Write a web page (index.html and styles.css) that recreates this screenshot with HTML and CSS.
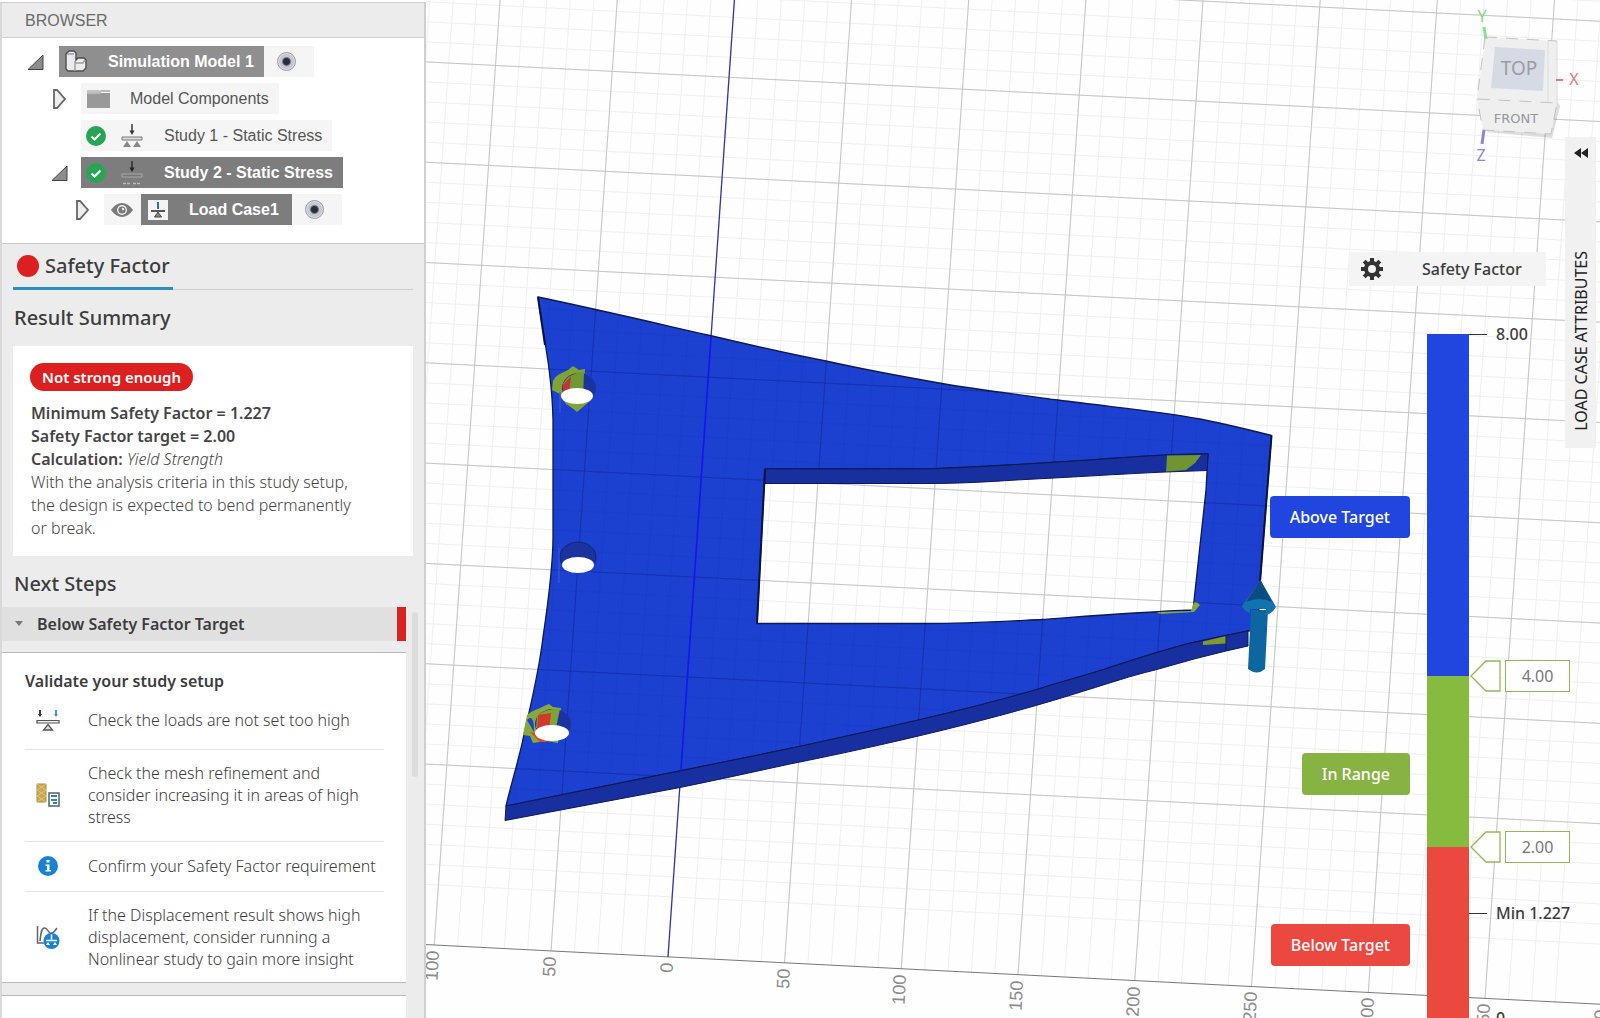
FILE: index.html
```html
<!DOCTYPE html>
<html lang="en">
<head>
<meta charset="utf-8">
<title>Simulation results - Safety Factor</title>
<link rel="stylesheet" href="styles.css">
</head>
<body>
<div class="app">
  <aside class="panel">
    <h1 class="panel-title">BROWSER</h1>

    <div class="tree">
      <div class="row">
        <button class="toggle" aria-label="Collapse"><svg width="18" height="18" viewBox="0 0 18 18"><path d="M2 16.500H17V2z" fill="#8c8c8c" stroke="#444"/></svg></button>
        <span class="node node-root">
          <svg width="24" height="24" viewBox="0 0 24 24"><path d="M2 4l3-3h5l2 2v7l2-2h6l2 2v8l-3 3H4l-2-2z" fill="#e9ebef" stroke="#4d4d4d" stroke-width="1.400"/><path d="M11 21V11M11 13h8l2-3M3 4h7" fill="none" stroke="#9a9da3" stroke-width="1.400"/></svg>
          <span>Simulation Model 1</span>
        </span>
        <label class="pick"><input type="radio" name="model" checked aria-label="Activate Simulation Model 1"></label>
      </div>
      <div class="row depth-1">
        <button class="toggle" aria-label="Expand"><svg width="18" height="22" viewBox="0 0 18 22"><path d="M3 2h3l8 9-8 9H3z" fill="#eee" stroke="#666" stroke-width="1.800"/></svg></button>
        <span class="node">
          <svg width="24" height="20" viewBox="0 0 24 20"><path d="M1 1h12l2 3H1z" fill="#c4c4c4"/><path d="M1 4h23v15H1z" fill="#999"/><path d="M1 4h12l2-2h9" fill="none" stroke="#bbb" stroke-width="2"/></svg>
          <span>Model Components</span>
        </span>
      </div>
      <div class="row depth-1">
        <span class="toggle"></span>
        <span class="node node-study">
          <svg width="20" height="20" viewBox="0 0 20 20"><circle cx="10" cy="10" r="10" fill="#27a552"/><path d="M5.500 10.500l3 3 6-6" fill="none" stroke="#fff" stroke-width="2.200"/></svg>
          <svg width="22" height="24" viewBox="0 0 22 24"><path d="M11 0v9" stroke="#444" stroke-width="1.600"/><path d="M8.500 6.500h5L11 11z" fill="#333"/><path d="M1 13h20v3H1z" fill="#ddd" stroke="#777"/><path d="M6 17l4 6H2zM16 17l4 6h-8z" fill="#888"/></svg>
          <span>Study 1 - Static Stress</span>
        </span>
      </div>
      <div class="row depth-1">
        <button class="toggle" aria-label="Collapse"><svg width="18" height="18" viewBox="0 0 18 18"><path d="M1 16.500H16V2z" fill="#8c8c8c" stroke="#444"/></svg></button>
        <span class="node node-study node-active">
          <svg width="20" height="20" viewBox="0 0 20 20"><circle cx="10" cy="10" r="10" fill="#27a552"/><path d="M5.500 10.500l3 3 6-6" fill="none" stroke="#fff" stroke-width="2.200"/></svg>
          <svg width="22" height="24" viewBox="0 0 22 24"><path d="M11 0v9" stroke="#333" stroke-width="1.600"/><path d="M8.500 6.500h5L11 11z" fill="#222"/><path d="M1 13h20v3H1z" fill="#777" stroke="#aaa"/><path d="M2 22.500h8M12 22.500h8" stroke="#bbb" stroke-width="1.400" stroke-dasharray="3 1"/></svg>
          <span>Study 2 - Static Stress</span>
        </span>
      </div>
      <div class="row depth-2">
        <button class="toggle" aria-label="Expand"><svg width="18" height="22" viewBox="0 0 18 22"><path d="M3 2h3l8 9-8 9H3z" fill="#eee" stroke="#666" stroke-width="1.800"/></svg></button>
        <button class="eye" aria-label="Show load case"><svg width="22" height="16" viewBox="0 0 22 16"><path d="M0 8Q5 1 11 1t11 7q-5 7-11 7T0 8z" fill="#7a7a7a"/><circle cx="11" cy="8" r="5" fill="#eee"/><circle cx="11" cy="8" r="3.600" fill="#7a7a7a"/><circle cx="12" cy="7" r="1.200" fill="#eee"/></svg></button>
        <span class="node node-case node-active">
          <svg width="20" height="20" viewBox="0 0 20 20"><path d="M0 0h20v20H0z" fill="#f4f4f4"/><path d="M10 2v7" stroke="#2a6fb0" stroke-width="2"/><path d="M3 11h14" stroke="#444" stroke-width="1.800"/><path d="M10 12l3.500 5h-7z" fill="#888" stroke="#444"/></svg>
          <span>Load Case1</span>
        </span>
        <label class="pick"><input type="radio" name="case" checked aria-label="Activate Load Case1"></label>
      </div>
    </div>

    <div class="tabs">
      <button class="tab"><span class="dot"></span>Safety Factor</button>
    </div>

    <h2 class="heading">Result Summary</h2>
    <section class="summary">
      <strong class="pill">Not strong enough</strong>
      <p><b>Minimum Safety Factor = 1.227</b></p>
      <p><b>Safety Factor target = 2.00</b></p>
      <p><b>Calculation:</b> <i>Yield Strength</i></p>
      <p>With the analysis criteria in this study setup, the design is expected to bend permanently or break.</p>
    </section>

    <h2 class="heading heading-next">Next Steps</h2>
    <div class="steps">
      <div class="steps-list">
        <button class="accordion"><svg width="8" height="6" viewBox="0 0 8 6"><path d="M0 0h8L4 5z" fill="#777"/></svg>Below Safety Factor Target</button>
        <section class="card">
          <h3>Validate your study setup</h3>
          <ul>
            <li>
              <svg width="24" height="24" viewBox="0 0 24 24"><path d="M4 2v6" stroke="#444" stroke-width="2"/><path d="M2 6h4L4 9z" fill="#333"/><path d="M20 2v6" stroke="#3f9ad8" stroke-width="2"/><path d="M18 6h4l-2 3z" fill="#3f9ad8"/><path d="M1 12.500h22v2.500H1z" fill="#eee" stroke="#555" stroke-width="1.200"/><path d="M12 16.500l4.500 5.500h-9z" fill="#ddd" stroke="#555" stroke-width="1.300"/></svg>
              <span>Check the loads are not set too high</span>
            </li>
            <li>
              <svg width="24" height="24" viewBox="0 0 24 24"><path d="M1 1h9v18H1z" fill="#c9a94f" stroke="#ad8e3c"/><path d="M1 1l9 6-9 6 9 6M10 1L1 7l9 6-9 6" fill="none" stroke="#dcc47c"/><path d="M13 10h10v13H13z" fill="#fff" stroke="#4c6375" stroke-width="1.500"/><path d="M15 13h6M15 17h6M17 20h4" stroke="#3481b8" stroke-width="2"/></svg>
              <span>Check the mesh refinement and consider increasing it in areas of high stress</span>
            </li>
            <li>
              <svg width="24" height="24" viewBox="0 0 24 24"><circle cx="12" cy="12" r="10" fill="#1a82d2"/><path d="M10.500 6h3v2.500h-3zM9.500 10.500h4V16H15v1.500H9.500V16h1.500v-4H9.500z" fill="#fff"/></svg>
              <span>Confirm your Safety Factor requirement</span>
            </li>
            <li>
              <svg width="24" height="24" viewBox="0 0 24 24"><path d="M1.500 1v17H8M4 16C5 8 5 4 8 3s4 4 6 5 5-2 7-5" fill="none" stroke="#666" stroke-width="1.500"/><circle cx="15.500" cy="16" r="8" fill="#1a82d2"/><path d="M15.500 9.500v5M10 15.500h11" stroke="#fff" stroke-width="1.600"/><path d="M12 17l2 3h-4zM19 17l2 3h-4z" fill="#fff"/></svg>
              <span>If the Displacement result shows high displacement, consider running a Nonlinear study to gain more insight</span>
            </li>
          </ul>
        </section>
        <section class="card card-more">
          <h3>Check other results</h3>
        </section>
      </div>
      <div class="scroll-thumb"></div>
    </div>
  </aside>

  <main class="stage">
    <svg class="scene" viewBox="426 0 1174 1018" preserveAspectRatio="xMinYMin slice" role="img" aria-label="Safety factor plot of the bracket">
      <defs>
        <g id="grid" transform="matrix(23.350 1.186 -1.392 19.990 729 77.300)" fill="none">
          <path class="minor" d="M-14-6V44m1 0V-6m1 0V44m1 0V-6m1 0V44m1 0V-6m1 0V44m1 0V-6m1 0V44m1 0V-6m1 0V44m1 0V-6m1 0V44m1 0V-6m1 0V44m1 0V-6m1 0V44m1 0V-6m1 0V44m1 0V-6m1 0V44m1 0V-6m1 0V44m1 0V-6m1 0V44m1 0V-6m1 0V44m1 0V-6m1 0V44m1 0V-6m1 0V44m1 0V-6m1 0V44m1 0V-6m1 0V44m1 0V-6m1 0V44m1 0V-6m1 0V44m1 0V-6m1 0V44m1 0V-6m1 0V44m1 0V-6m1 0V44m1 0V-6m1 0V44m1 0V-6m1 0V44m1 0V-6m1 0V44m1 0V-6m1 0V44"/>
          <path class="minor" d="M-14-6H41m0 1H-14m0 1H41m0 1H-14m0 1H41m0 1H-14m0 1H41m0 1H-14m0 1H41m0 1H-14m0 1H41m0 1H-14m0 1H41m0 1H-14m0 1H41m0 1H-14m0 1H41m0 1H-14m0 1H41m0 1H-14m0 1H41m0 1H-14m0 1H41m0 1H-14m0 1H41m0 1H-14m0 1H41m0 1H-14m0 1H41m0 1H-14m0 1H41m0 1H-14m0 1H41m0 1H-14m0 1H41m0 1H-14m0 1H41m0 1H-14m0 1H41m0 1H-14m0 1H41m0 1H-14m0 1H41m0 1H-14m0 1H41m0 1H-14m0 1H41m0 1H-14"/>
          <path class="major" d="M-10-6V44m5 0V-6m10 0V44m5 0V-6m5 0V44m5 0V-6m5 0V44m5 0V-6m5 0V44m5 0V-6M-14-5H41m0 5H-14m0 5H41m0 5H-14m0 5H41m0 5H-14m0 5H41m0 5H-14m0 5H41"/>
          <path class="edge" d="M-14 44H41"/>
        </g>
        <path id="plate" fill-rule="evenodd" clip-rule="evenodd" d="M538 297C600 310 655 323 710 335.500C750 345 790 354 826 361C866 370 905 377 942 383.500C980 390 1020 395 1058 400C1110 407 1160 411 1200 419C1225 424 1250 430 1271.500 435.500L1260 582L1258 630L1248 631L1226 635.500L1191 643C1160 651 1130 661 1105 669C1080 677 1060 682 1035 690C960 712 870 731 790 748.500L680 771L506 806C511 785 517 765 522 744C526 723 538 680 543 637C550 590 553 560 553 537V420C552 370 542 330 538 297zM765 469H926C985 467 1040 463 1091 460C1130 457 1170 454 1208 454L1206 490L1193 610C1140 612 1090 616 1041 619.500C1010 621 970 623.500 926 623.500H757z"/>
      </defs>
      <path d="M426 0h1174v1018H426z" fill="#fefefe"/>
      <use href="#grid"/>
      <path d="M734.400 0L668 957" stroke="#3434a8" stroke-width="1.300"/>

      <use href="#plate" fill="#1c40cf" stroke="#0c1a55" stroke-width="1.300"/>
      <path d="M506 806L680 771L790 748.500C870 731 960 712 1035 690C1060 682 1080 677 1105 669C1130 661 1160 651 1191 643L1226 635.500L1248 631V646L1226 651L1194 659L1155 670C1130 676 1110 683 1087 690C1000 718 890 744 790 764C753 772 717 780 680 787.500L505 820.500z" fill="#18309f" stroke="#0c1a55"/>
      <path d="M765 469H926C985 467 1040 463 1091 460C1130 457 1170 454 1208 454L1207 470.500C1145 472 1080 477 1016 480C985 482 960 483.500 926 483.500H765z" fill="#18309f" stroke="#0c1a55"/>
      <path d="M765 469L757 623.500M1271.500 435.500L1260 582M538 297L545 345" stroke="#0a1440" stroke-width="2"/>
      <path d="M1167 455.500L1201 455L1195 463L1186 470L1166 471.500z" fill="#6f9430"/>
      <path d="M1157 612L1191 611L1194 602L1197 602L1200 605L1194 612L1160 614z" fill="#86a93a"/>
      <path d="M1203 641.500L1226 636V643.500L1203 645z" fill="#7d9c2f"/>
      <path d="M1226 636v15" stroke="#0c1a55"/>

      <clipPath id="onPlate"><use href="#plate"/></clipPath>
      <g clip-path="url(#onPlate)">
        <use href="#grid" class="grid-over"/>
        <path d="M734.400 0L668 957" stroke="#1515f0" stroke-width="1.600"/>
      </g>

      <path d="M552 390L553 381C556 374 563 373 568 370L573 366L579 370L585 369L584 385L586 401L577 411L566 404L560 394z" fill="#7fa335"/>
      <ellipse cx="579" cy="388" rx="17" ry="15" fill="#1a339f"/>
      <path d="M563 384C567 375 577 372 584 372L583 398H566z" fill="#6f9a31"/>
      <path d="M563 385L571 376L569 394H563z" fill="#c73333"/>
      <path d="M563 400L590 401L577 412z" fill="#7fa335"/>
      <ellipse cx="577" cy="396" rx="16" ry="8" fill="#fff"/>
      <path d="M560 392v20" stroke="#3a5be0"/>

      <ellipse cx="578" cy="557" rx="18" ry="15" fill="#1a339f" stroke="#132774"/>
      <ellipse cx="578" cy="565" rx="16" ry="8" fill="#fff"/>
      <path d="M559 548v35" stroke="#3a5be0"/>

      <path d="M523 735L527 715C532 710 540 709 544 706L549 704L553 707L561 708L559 722L558 743L546 741L533 743L530 736z" fill="#86a93a"/>
      <ellipse cx="553" cy="724" rx="18" ry="15" fill="#1a339f"/>
      <path d="M537 716C545 709 553 709 560 709L556 728H536z" fill="#7fa335"/>
      <path d="M538 715L551 713L549 730L537 730z" fill="#d2382c"/>
      <path d="M527 720q7-7 7 12z" fill="#1c40cf"/>
      <path d="M530 732L536 733L547 742L540 742z" fill="#e0442f"/>
      <ellipse cx="552" cy="733" rx="17" ry="8" fill="#fff"/>

      <path d="M1251 610L1268 610L1265 669Q1257 676 1248 669z" fill="#0e66a0"/>
      <path d="M1260.500 580L1276 607Q1272 614 1266 615V609H1250V613Q1244 611 1242 606z" fill="#1274ae"/>
      <path d="M1260.500 580L1272 602Q1260 596 1246 602z" fill="#0d4b82"/>

      <g class="axis">
        <text transform="translate(439 951) rotate(-87)">100</text>
        <text transform="translate(556 957) rotate(-87)">50</text>
        <text transform="translate(673 963) rotate(-87)">0</text>
        <text transform="translate(790 969) rotate(-87)">50</text>
        <text transform="translate(906 975) rotate(-87)">100</text>
        <text transform="translate(1023 981) rotate(-87)">150</text>
        <text transform="translate(1140 987) rotate(-87)">200</text>
        <text transform="translate(1257 992) rotate(-87)">250</text>
        <text transform="translate(1374 998) rotate(-87)">300</text>
        <text transform="translate(1490 1004) rotate(-87)">350</text>
        <text transform="translate(1607 1010) rotate(-87)">400</text>
      </g>
    </svg>

    <svg class="cube" width="110" height="160" viewBox="1470 5 110 160" role="img" aria-label="View cube">
      <path d="M1486 132l66 6 8-32-3-6z" fill="#000" opacity=".13"/>
      <path d="M1485 37L1557 41L1557 103L1551 134L1483 130L1477 99z" fill="#efeff0"/>
      <path d="M1495 47L1545 50L1543 91L1491 88z" fill="#d6dae4"/>
      <path d="M1548 41v61M1557 41v62" stroke="#dcdcdc"/>
      <path d="M1485 37L1557 41M1485 37L1477 99L1557 103L1551 134L1483 130L1477 99" fill="none" stroke="#c2c2c2" stroke-dasharray="12 9"/>
      <path d="M1484 27l2 12" stroke="#8be08b" stroke-width="3"/>
      <path d="M1556 80h7" stroke="#e07a86" stroke-width="2"/>
      <path d="M1484 130l-2 14" stroke="#8a86e0" stroke-width="3"/>
      <text x="1519" y="75" class="face">TOP</text>
      <text x="1516" y="123" class="face-front">FRONT</text>
      <text x="1482" y="22" class="axis-y">Y</text>
      <text x="1574" y="85" class="axis-x">X</text>
      <text x="1481" y="161" class="axis-z">Z</text>
    </svg>

    <button class="attributes">
      <svg width="14" height="10" viewBox="0 0 14 10"><path d="M7 0v10L0 5zM14 0v10L7 5z" fill="#222"/></svg>
      <span>LOAD CASE ATTRIBUTES</span>
    </button>

    <div class="result-picker">
      <button class="gear" aria-label="Legend options"><svg width="22" height="22" viewBox="0 0 22 22"><circle cx="11" cy="11" r="6" fill="none" stroke="#333" stroke-width="4"/><path d="M11 0v4M11 18v4M0 11h4M18 11h4M3.200 3.200L6 6M16 16l2.800 2.800M3.200 18.800L6 16M16 6l2.800-2.800" stroke="#333" stroke-width="4"/></svg></button>
      <span>Safety Factor</span>
    </div>

    <div class="legend">
      <div class="band"><span class="tag above">Above Target</span></div>
      <div class="bar above"></div>
      <div class="band"><span class="tag range">In Range</span></div>
      <div class="bar range-bar"></div>
      <div class="band"><span class="tag below">Below Target</span></div>
      <div class="bar below"></div>
      <div class="ticks">
        <div class="tick" style="top:0%">8.00</div>
        <label class="flag" style="top:50%"><svg width="31" height="32" viewBox="0 0 31 32"><path d="M1 16L16 1h14v30H16z" fill="#fff" stroke="#93b85a" stroke-width="1.300"/></svg><input type="text" value="4.00" aria-label="Upper target"></label>
        <label class="flag" style="top:75%"><svg width="31" height="32" viewBox="0 0 31 32"><path d="M1 16L16 1h14v30H16z" fill="#fff" stroke="#93b85a" stroke-width="1.300"/></svg><input type="text" value="2.00" aria-label="Lower target"></label>
        <div class="tick" style="top:84.66%">Min 1.227</div>
        <div class="tick" style="top:100%">0</div>
      </div>
    </div>
  </main>
</div>
</body>
</html>
```
FILE: styles.css
```css
* { box-sizing: border-box; }
body {
  margin: 0;
  font-family: "Noto Sans", "Open Sans", sans-serif;
  font-size: 16px;
  color: #3c3c3c;
}
button {
  border: 0;
  padding: 0;
  background: none;
  font: inherit;
  color: inherit;
}
h1, h2, h3, p, ul { margin: 0; padding: 0; }
svg { display: block; flex: none; }

.app {
  display: grid;
  grid-template-columns: 426px 1fr;
  height: 100vh;
  overflow: hidden;
}

/* Left panel */
.panel {
  display: flex;
  flex-direction: column;
  min-height: 0;
  overflow: hidden;
  margin-top: 2px;
  border-left: 2px solid #d8d8d8;
  border-right: 2px solid #cfcfcf;
  border-top: 1px solid #ccc;
  background: #ececec;
}
.panel-title {
  flex: none;
  height: 35px;
  padding-left: 23px;
  font: 16px/35px "Liberation Sans", Arial, sans-serif;
  color: #6a6a6a;
  border-bottom: 1px solid #d0d0d0;
}
.tree {
  flex: none;
  display: flex;
  flex-direction: column;
  gap: 6px;
  height: 206px;
  padding: 8px 0 0 24px;
  background: #fff;
  border-bottom: 1px solid #c8c8c8;
  font: 16px/30px "Liberation Sans", Arial, sans-serif;
  color: #555;
}
.row { display: flex; height: 31px; }
.depth-1 { padding-left: 23px; }
.depth-2 { padding-left: 48px; }
.toggle {
  display: flex;
  align-items: center;
  width: 33px;
}
.depth-1 .toggle { width: 32px; padding-left: 2px; }
.depth-2 .toggle { width: 30px; }
.node {
  display: flex;
  align-items: center;
  gap: 20px;
  padding: 0 10px 0 5px;
  background: #f5f5f5;
}
.node-root {
  background: #8f8f8f;
  color: #fff;
  font-weight: bold;
}
.node-study { gap: 15px; }
.node-study span { padding-left: 6px; }
.node-case { gap: 21px; padding: 0 13px 0 7px; }
.node-active {
  background: #7d7d7d;
  color: #fff;
  font-weight: bold;
}
.pick {
  display: flex;
  align-items: center;
  width: 50px;
  padding-left: 13px;
  background: #f5f5f5;
}
.pick input {
  appearance: none;
  width: 19px;
  height: 19px;
  margin: 0;
  border: 1px solid #999;
  border-radius: 50%;
  background: radial-gradient(circle, #2a2d3a 0 3px, #c4c8d6 5px 7px, #f4f4f8 9px);
}
.eye {
  width: 37px;
  padding-left: 7px;
  background: #f5f5f5;
}

.tabs {
  flex: none;
  height: 46px;
  margin: 0 11px 0 11px;
  border-bottom: 1px solid #ccc;
}
.tab {
  display: flex;
  align-items: center;
  gap: 6px;
  height: 46px;
  padding: 0 3px 0 4px;
  border-bottom: 3px solid #2a8dc4;
  font-size: 20px;
  font-weight: 500;
}
.dot {
  width: 22px;
  height: 22px;
  border-radius: 50%;
  background: #de1f1f;
}
.heading {
  flex: none;
  padding: 13px 0 0 12px;
  font-size: 20px;
  line-height: 30px;
  font-weight: 500;
}
.summary {
  flex: none;
  margin: 13px 11px 0 11px;
  height: 210px;
  padding: 17px 52px 0 18px;
  background: #fff;
  line-height: 23px;
}
.summary p { font-weight: 300; font-size: 16px; color: #444; }
.summary b, .card h3, .accordion { font-weight: 600; }
.pill {
  display: block;
  width: max-content;
  margin: 0 0 11px -1px;
  padding: 0 12px;
  border-radius: 14px;
  background: #dc2020;
  color: #fff;
  font-size: 15px;
  font-weight: 600;
  line-height: 28px;
}
.steps {
  flex: 1;
  min-height: 0;
  display: flex;
  gap: 6px;
  padding-top: 8px;
}
.steps-list { width: 404px; overflow: hidden; }
.accordion {
  display: flex;
  align-items: center;
  gap: 14px;
  width: 100%;
  height: 34px;
  padding-left: 13px;
  background: #e0e0e0;
  border-right: 9px solid #d92323;
}
.card {
  margin-top: 11px;
  padding: 17px 22px 0 23px;
  height: 331px;
  background: #fff;
  border-top: 1px solid #b8b8b8;
  border-bottom: 1px solid #b8b8b8;
}
.card h3 { font-size: 16px; line-height: 23px; }
.card ul { list-style: none; }
.card li {
  display: flex;
  align-items: center;
  gap: 28px;
  padding: 12px 0 13px 11px;
  border-bottom: 1px solid #e4e4e4;
  font-weight: 300;
  line-height: 22px;
}
.card li:first-child { padding: 15px 0 17px 11px; }
.card li:last-child { border: 0; }
.card-more { margin-top: 12px; }
.scroll-thumb {
  width: 6px;
  height: 165px;
  margin-top: 5px;
  border-radius: 3px;
  background: #dcdcdc;
}

/* Canvas */
.stage { position: relative; overflow: hidden; }
.scene { width: 100%; height: 100%; }
.scene path { vector-effect: non-scaling-stroke; }
.scene { --minor: #efefef; --major: #c6c6c6; --edge: #777; }
.grid-over {
  --minor: rgba(10, 20, 90, .04);
  --major: rgba(10, 20, 90, .28);
  --edge: none;
}
.minor { stroke: var(--minor); stroke-width: 1px; }
.major { stroke: var(--major); stroke-width: 1px; }
.edge { stroke: var(--edge); stroke-width: 1px; }
.axis {
  font: 18px "Liberation Sans", Arial, sans-serif;
  fill: #8a8a8a;
  text-anchor: end;
}
.cube { position: absolute; top: 5px; right: 20px; overflow: visible; }
.cube text { text-anchor: middle; }
.face { font: 19px "Noto Sans", sans-serif; fill: #9a9da3; }
.face-front { font: 13px "DejaVu Sans", sans-serif; fill: #94979c; }
.axis-x, .axis-y, .axis-z { font: 16px "Noto Sans", sans-serif; }
.axis-x { fill: #e07a86; }
.axis-y { fill: #7fdd7f; }
.axis-z { fill: #8a86e0; }

.attributes {
  position: absolute;
  top: 137px;
  right: 4px;
  display: flex;
  flex-direction: column;
  align-items: center;
  justify-content: space-between;
  width: 31px;
  height: 311px;
  padding: 11px 0 17px;
  background: #f1f1f1;
  color: #222;
}
.attributes span { writing-mode: vertical-rl; transform: rotate(180deg); line-height: 24px; }

.result-picker {
  position: absolute;
  top: 252px;
  right: 54px;
  display: flex;
  align-items: center;
  gap: 39px;
  width: 197px;
  height: 34px;
  padding-left: 12px;
  background: #f4f4f4;
  font-weight: 500;
}

.legend {
  position: absolute;
  top: 334px;
  bottom: 0;
  right: 31px;
  display: grid;
  grid-template-columns: auto 42px 100px;
  grid-template-rows: 2fr 1fr 1fr;
}
.band {
  grid-column: 1;
  display: flex;
  align-items: center;
  justify-content: flex-end;
  padding: 24px 17px 0 0;
}
.bar { grid-column: 2; }
.tag {
  padding: 0 20px;
  border-radius: 4px;
  color: #fff;
  font-weight: 500;
  line-height: 42px;
}
.above { background: #2146e0; }
.range { background: #86b341; }
.range-bar { background: #86bb40; }
.below { background: #eb4840; }
.ticks { grid-column: 3; grid-row: 1 / 4; position: relative; }
.tick, .flag {
  position: absolute;
  left: 0;
  display: flex;
  align-items: center;
  transform: translateY(-50%);
  white-space: nowrap;
}
.tick { gap: 9px; font-weight: 500; }
.tick::before { content: ""; width: 18px; height: 1px; background: #333; }
.flag { left: 1px; gap: 4px; }
.flag input {
  width: 65px;
  height: 32px;
  padding: 0;
  border: 1px solid #93b85a;
  background: #fff;
  font: inherit;
  color: #777;
  text-align: center;
}
```
